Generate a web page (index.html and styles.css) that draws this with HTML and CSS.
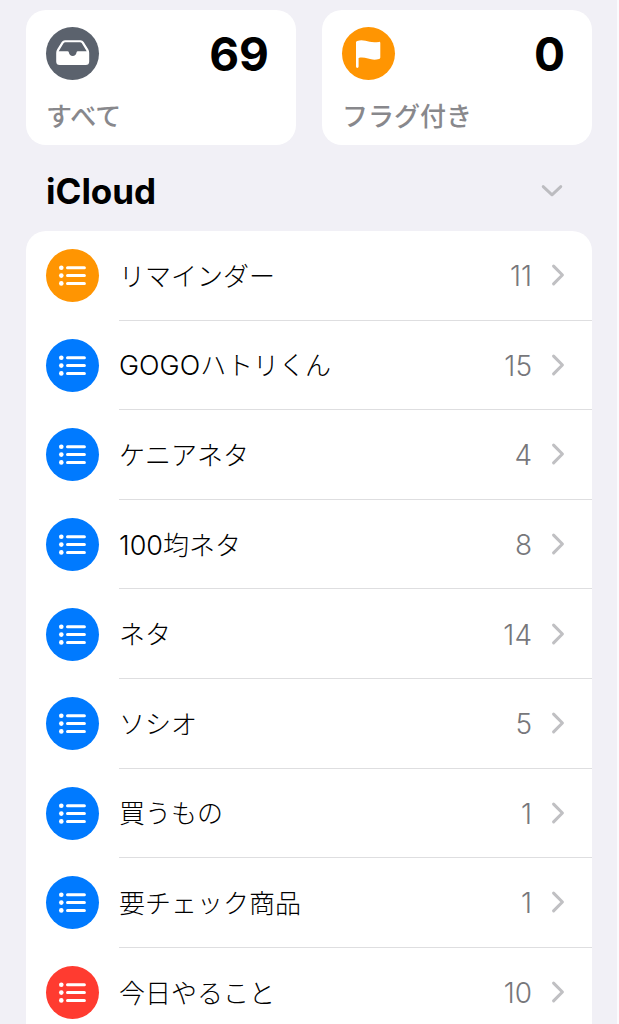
FILE: index.html
```html
<!DOCTYPE html>
<html lang="ja">
    <head>
        <meta charset="UTF-8">
        <meta name="viewport" content="width=device-width, initial-scale=1.0">
        <title>リマインダー</title>
        <link rel="stylesheet" href="styles.css">
    </head>

    <body>
        <svg class="symbols" aria-hidden="true">
            <symbol id="list" viewBox="0 0 53 53">
                <circle cx="15.3" cy="18.700" r="2.3"/>
                <circle cx="15.3" cy="26.600" r="2.3"/>
                <circle cx="15.3" cy="34.400" r="2.3"/>
                <path d="M21.500 18.700H38.400M21.500 26.600H38.400M21.500 34.400H38.400" stroke="white" stroke-width="3" stroke-linecap="round"/>
            </symbol>
            <symbol id="chevron" viewBox="0 0 12 20">
                <path d="M2 2L10 10L2 18" fill="none" stroke="#c0c0c3" stroke-width="2.8" stroke-linecap="round" stroke-linejoin="round"/>
            </symbol>
        </svg>

        <nav class="cards">
            <a class="card" href="#all">
                <svg class="icon gray" viewBox="0 0 53 53" aria-hidden="true">
                    <path fill-rule="evenodd" d="M19 13.300H34.500Q36.600 13.300 37.700 15L42.200 22.300Q43.200 24 43.200 26V34.500Q43.200 38 39.700 38H13.700Q10.200 38 10.200 34.500V26Q10.200 24 11.200 22.300L15.700 15Q16.800 13.300 19 13.300ZM19.300 15.200Q18.300 15.200 17.700 16.100L12.700 24.300H21.500Q22.700 24.300 22.900 25.600Q23.500 29 26.700 29Q29.900 29 30.500 25.600Q30.700 24.300 31.900 24.300H40.700L35.700 16.100Q35.100 15.200 34.100 15.200Z"/>
                </svg>
                <span class="total">69</span>
                <span class="label">すべて</span>
            </a>
            <a class="card" href="#flagged">
                <svg class="icon orange" viewBox="0 0 53 53" aria-hidden="true">
                    <path d="M14 15.500Q14 14.300 15.200 13.900C18 13 20.500 13 23.500 13.800C27.500 15 31 15.800 37 14.900Q38.300 14.700 38.300 16V30.500Q38.300 31.700 37.100 32.100C33 33.200 29.500 32.800 26 31.600C22.500 30.400 19.500 30.100 16.600 30.900V39.500Q16.600 40.900 15.300 40.900Q14 40.900 14 39.500Z"/>
                </svg>
                <span class="total">0</span>
                <span class="label">フラグ付き</span>
            </a>
        </nav>

        <header class="header">
            <h2>iCloud</h2>
            <button class="toggle" type="button" aria-label="iCloud">
                <svg viewBox="0 0 20 12" aria-hidden="true"><path d="M2 2L10 9.500L18 2" fill="none" stroke="#bcbcc0" stroke-width="2.6" stroke-linecap="round" stroke-linejoin="round"/></svg>
            </button>
        </header>

        <ul class="lists">
            <li><a class="row" href="#list1">
                <svg class="icon orange"><use href="#list"/></svg>
                <span class="detail"><span class="name">リマインダー</span><span class="count">11</span><svg class="chevron"><use href="#chevron"/></svg></span>
            </a></li>
            <li><a class="row" href="#list2">
                <svg class="icon blue"><use href="#list"/></svg>
                <span class="detail"><span class="name"><span class="latin">GOGO</span>ハトリくん</span><span class="count">15</span><svg class="chevron"><use href="#chevron"/></svg></span>
            </a></li>
            <li><a class="row" href="#list3">
                <svg class="icon blue"><use href="#list"/></svg>
                <span class="detail"><span class="name">ケニアネタ</span><span class="count">4</span><svg class="chevron"><use href="#chevron"/></svg></span>
            </a></li>
            <li><a class="row" href="#list4">
                <svg class="icon blue"><use href="#list"/></svg>
                <span class="detail"><span class="name"><span class="latin">100</span>均ネタ</span><span class="count">8</span><svg class="chevron"><use href="#chevron"/></svg></span>
            </a></li>
            <li><a class="row" href="#list5">
                <svg class="icon blue"><use href="#list"/></svg>
                <span class="detail"><span class="name">ネタ</span><span class="count">14</span><svg class="chevron"><use href="#chevron"/></svg></span>
            </a></li>
            <li><a class="row" href="#list6">
                <svg class="icon blue"><use href="#list"/></svg>
                <span class="detail"><span class="name">ソシオ</span><span class="count">5</span><svg class="chevron"><use href="#chevron"/></svg></span>
            </a></li>
            <li><a class="row" href="#list7">
                <svg class="icon blue"><use href="#list"/></svg>
                <span class="detail"><span class="name">買うもの</span><span class="count">1</span><svg class="chevron"><use href="#chevron"/></svg></span>
            </a></li>
            <li><a class="row" href="#list8">
                <svg class="icon blue"><use href="#list"/></svg>
                <span class="detail"><span class="name">要チェック商品</span><span class="count">1</span><svg class="chevron"><use href="#chevron"/></svg></span>
            </a></li>
            <li><a class="row" href="#list9">
                <svg class="icon red"><use href="#list"/></svg>
                <span class="detail"><span class="name">今日やること</span><span class="count">10</span><svg class="chevron"><use href="#chevron"/></svg></span>
            </a></li>
        </ul>
    </body>
</html>
```
FILE: styles.css
```css
* {
    margin: 0;
    padding: 0;
    box-sizing: border-box;
}
html {
    background-color: #f1f0f6;
    scrollbar-width: none;
}
body {
    padding: 10px 25px 0px 26px;
    border-right: 2px solid #fbfbfd;
    font-family: Inter, "Noto Sans CJK JP", sans-serif;
    color: black;
}
a {
    color: inherit;
    text-decoration: none;
}
.symbols {
    display: none;
}
.cards {
    display: grid;
    grid-template-columns: 1fr 1fr;
    gap: 26px;
}
.card {
    display: grid;
    grid-template-columns: auto 1fr;
    row-gap: 18px;
    padding: 17px 27px 10px 20px;
    background-color: white;
    border-radius: 20px;
}
.icon {
    width: 53px;
    height: 53px;
    border-radius: 50%;
    fill: white;
    flex: none;
}
.gray {
    background-color: #5b626d;
}
.orange {
    background-color: #ff9502;
}
.blue {
    background-color: #007aff;
}
.red {
    background-color: #ff3b30;
}
.total {
    text-align: right;
    font-size: 46px;
    font-weight: 700;
    line-height: 54px;
}
.label {
    grid-column: 1 / 3;
    font-size: 26px;
    font-weight: 500;
    line-height: 36px;
    color: #88888c;
}
.header {
    display: flex;
    justify-content: space-between;
    align-items: center;
    height: 86px;
    padding: 6px 27px 0px 20px;
}
.header h2 {
    font-size: 35px;
    font-weight: 700;
    line-height: 42px;
}
.toggle {
    display: flex;
    padding: 2px;
    border: none;
    background: none;
    cursor: pointer;
}
.toggle svg {
    width: 22px;
    height: 14px;
}
.lists {
    list-style: none;
    background-color: white;
    border-radius: 20px 20px 0px 0px;
}
.row {
    display: flex;
    align-items: center;
    gap: 20px;
    padding-left: 20px;
}
/* the line starts beside the icon and runs to the right edge */
.detail {
    flex: 1;
    display: flex;
    align-items: center;
    min-height: 3.2em;
    padding-right: 27px;
    border-bottom: 1px solid #dedee0;
    font-size: 28px;
}
.name {
    flex: 1;
    padding-top: 3px;
    font-size: 26px;
    font-weight: 300;
    line-height: 52px;
}
.latin {
    font-size: 27px;
}
.count {
    padding-top: 2px;
    font-weight: 300;
    line-height: 52px;
    color: #77777b;
}
.chevron {
    width: 14px;
    height: 22px;
    margin-left: 19px;
}
```
